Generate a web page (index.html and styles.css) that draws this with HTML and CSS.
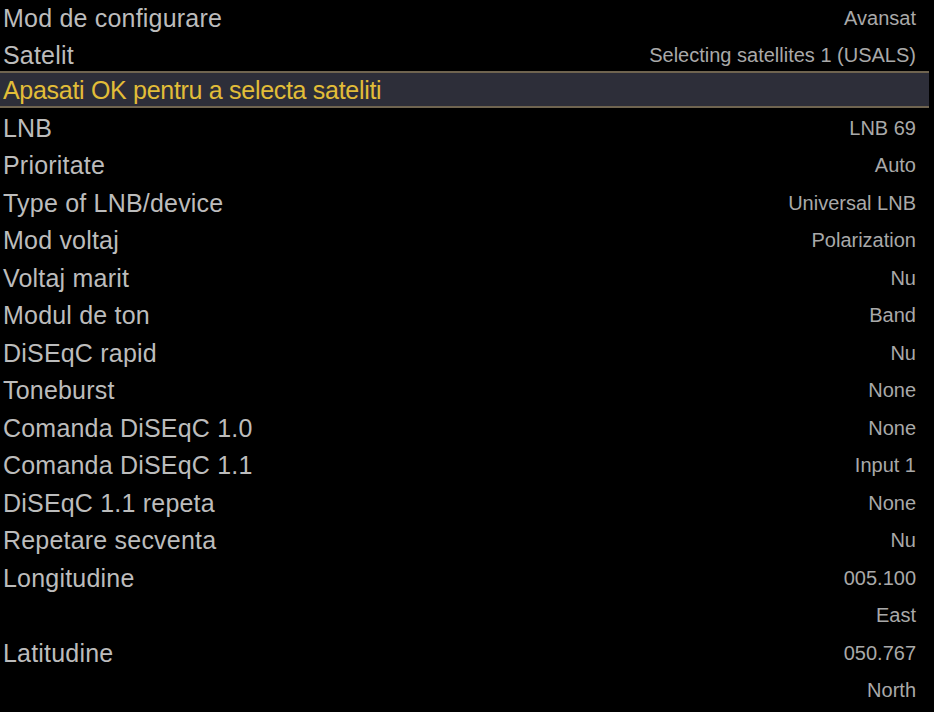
FILE: index.html
```html
<!DOCTYPE html>
<html>
<head>
<meta charset="utf-8">
<link rel="stylesheet" href="styles.css">
</head>
<body>
<div class="list">
  <div class="row"><span class="label">Mod de configurare</span><span class="value">Avansat</span></div>
  <div class="row"><span class="label">Satelit</span><span class="value">Selecting satellites 1 (USALS)</span></div>
  <div class="row selected"><span class="label">Apasati OK pentru a selecta sateliti</span><span class="value"></span></div>
  <div class="row"><span class="label">LNB</span><span class="value">LNB 69</span></div>
  <div class="row"><span class="label">Prioritate</span><span class="value">Auto</span></div>
  <div class="row"><span class="label">Type of LNB/device</span><span class="value">Universal LNB</span></div>
  <div class="row"><span class="label">Mod voltaj</span><span class="value">Polarization</span></div>
  <div class="row"><span class="label">Voltaj marit</span><span class="value">Nu</span></div>
  <div class="row"><span class="label">Modul de ton</span><span class="value">Band</span></div>
  <div class="row"><span class="label">DiSEqC rapid</span><span class="value">Nu</span></div>
  <div class="row"><span class="label">Toneburst</span><span class="value">None</span></div>
  <div class="row"><span class="label">Comanda DiSEqC 1.0</span><span class="value">None</span></div>
  <div class="row"><span class="label">Comanda DiSEqC 1.1</span><span class="value">Input 1</span></div>
  <div class="row"><span class="label">DiSEqC 1.1 repeta</span><span class="value">None</span></div>
  <div class="row"><span class="label">Repetare secventa</span><span class="value">Nu</span></div>
  <div class="row"><span class="label">Longitudine</span><span class="value">005.100</span></div>
  <div class="row"><span class="label"></span><span class="value">East</span></div>
  <div class="row"><span class="label">Latitudine</span><span class="value">050.767</span></div>
  <div class="row"><span class="label"></span><span class="value">North</span></div>
</div>
</body>
</html>
```
FILE: styles.css
```css
html, body {
  margin: 0;
  padding: 0;
  background: #000;
  overflow: hidden;
}
body {
  width: 934px;
  height: 712px;
  font-family: "Liberation Sans", Arial, sans-serif;
}
.list {
  display: flex;
  flex-direction: column;
  margin-top: -2px;
  width: 929px;
}
.row {
  height: 37.5px;
  display: flex;
  align-items: center;
  justify-content: space-between;
  padding: 3px 13px 0 3px;
  box-sizing: border-box;
}
.label {
  font-size: 25px;
  color: #bcbcbc;
  letter-spacing: 0.2px;
  white-space: nowrap;
}
.value {
  font-size: 20px;
  color: #a9a9a9;
  letter-spacing: 0;
  white-space: nowrap;
}
.row.selected {
  background: #2d2e39;
  border-top: 2px solid #6f6450;
  border-bottom: 2px solid #6f6450;
  margin-top: -2px;
  height: 37px;
  padding-top: 2px;
}
.row.selected .label {
  color: #e2bd38;
  letter-spacing: -0.3px;
}
```
